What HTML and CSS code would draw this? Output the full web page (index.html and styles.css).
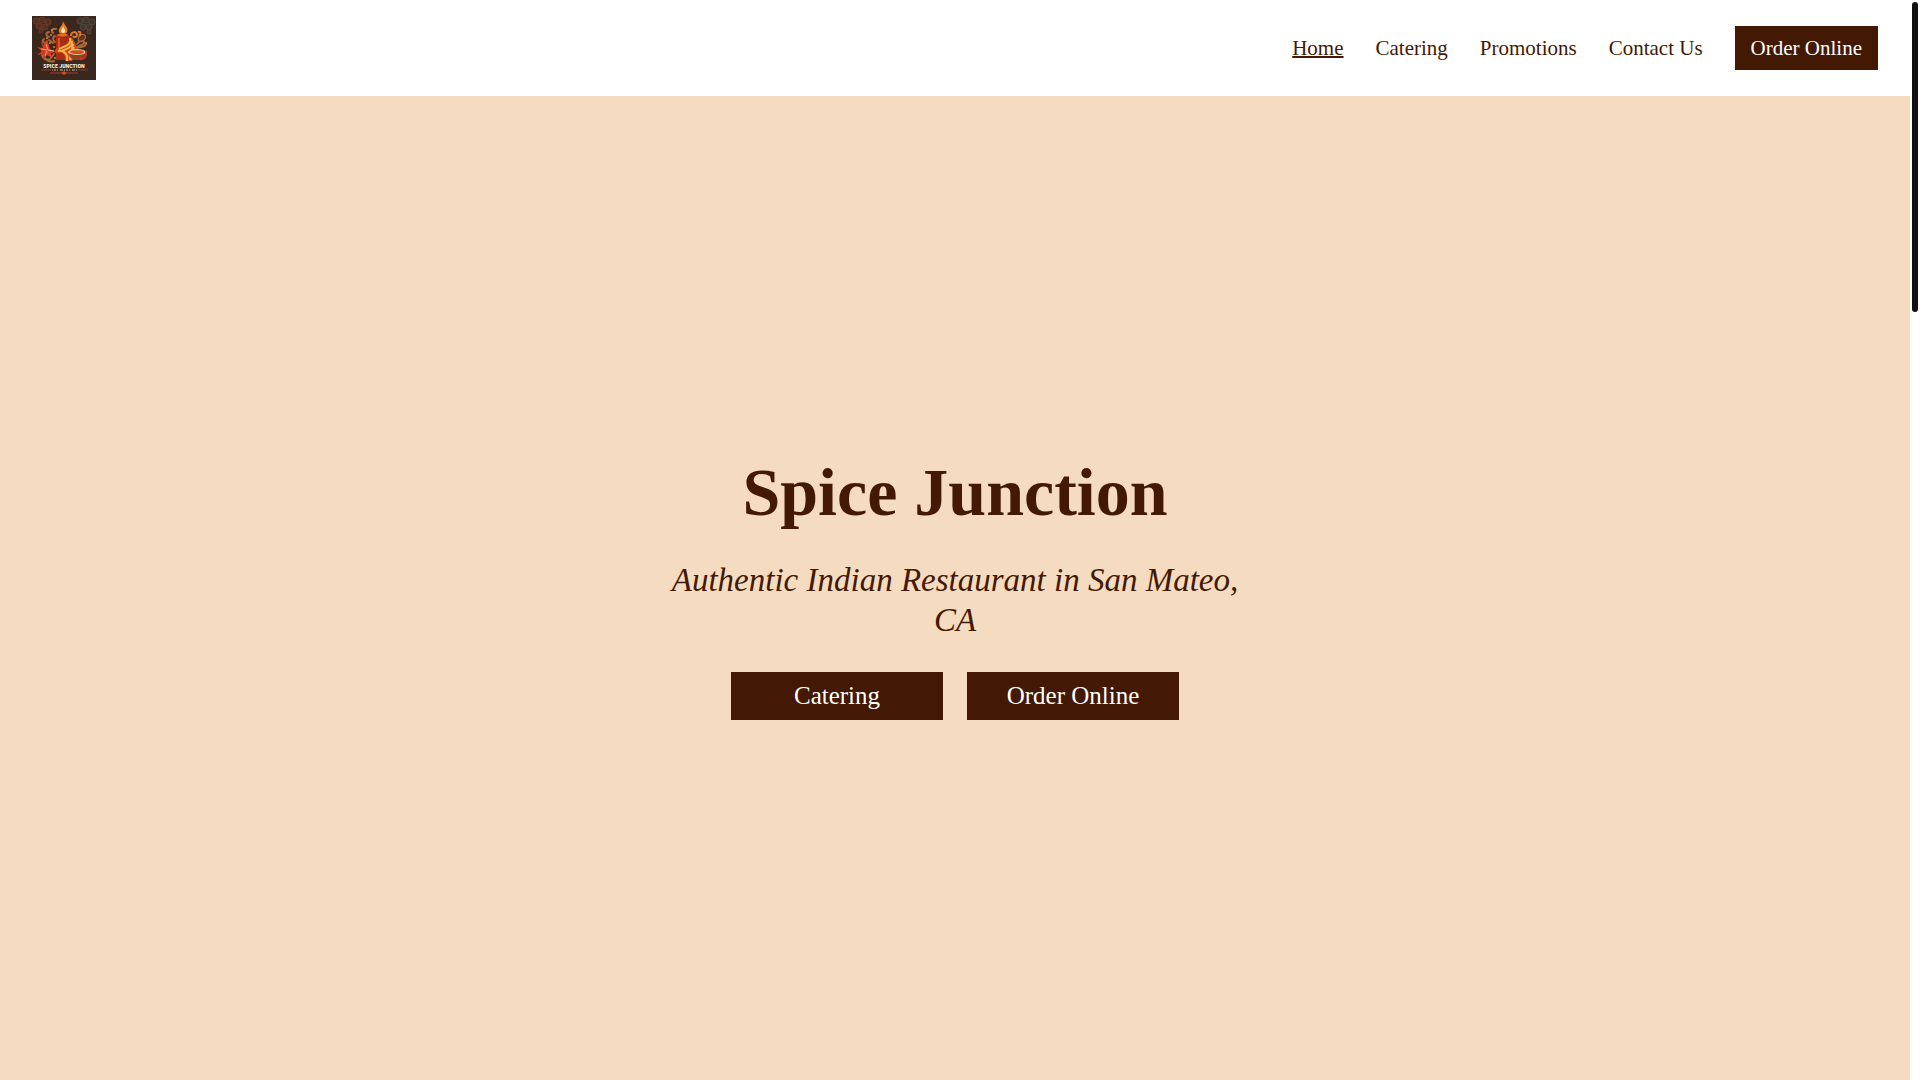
FILE: index.html
```html
<!DOCTYPE html>
<html lang="en">
<head>
    <meta charset="UTF-8">
    <meta name="viewport" content="width=device-width, initial-scale=1.0">
    <title>Spice Junction</title>
    <link rel="stylesheet" href="styles.css">
</head>
<body>
    <header class="header">
        <a href="#" class="logo" aria-label="Spice Junction">
            <svg viewBox="0 0 64 64" width="64" height="64">
                <rect width="64" height="64" fill="#3a281f"/>
                <!-- faded corner spices -->
                <g fill="#54301f" stroke="#6b3a26">
                    <circle cx="4" cy="5" r="3"/>
                    <circle cx="10" cy="4" r="3"/>
                    <circle cx="16" cy="6" r="3"/>
                    <circle cx="7" cy="10" r="3"/>
                    <circle cx="13" cy="11" r="3"/>
                    <circle cx="9" cy="15" r="2"/>
                </g>
                <g fill="#43362e" stroke="#52453c">
                    <circle cx="48" cy="5" r="3"/>
                    <circle cx="54" cy="4" r="3"/>
                    <circle cx="60" cy="6" r="3"/>
                    <circle cx="51" cy="11" r="3"/>
                    <circle cx="57" cy="11" r="3"/>
                    <circle cx="57" cy="16" r="2"/>
                </g>
                <!-- wreath of seeds and leaves -->
                <g fill="none" stroke="#a76935" stroke-width="2" stroke-linecap="round">
                    <path d="M24 13c-4-1-5 2-3 4M17 16c-4 1-3 4 0 5M12 23c-3 2 0 5 3 3M23 20c-3 1-2 5 0 6M10 39c1 4 5 6 8 4M13 42c3 4 6 4 9 3M21 27l-4-3M22 38l-3 4"/>
                    <path d="M45 28c3-4 8-4 7-1-2 3-6 2-9 6M43 33c4-3 10-1 11-5M39 23c2 1 2 3 1 5"/>
                </g>
                <g fill="#d88a3e">
                    <circle cx="19" cy="19" r="1"/>
                    <circle cx="20" cy="14" r="1"/>
                    <circle cx="15" cy="22" r="1"/>
                    <circle cx="18" cy="27" r="1"/>
                    <circle cx="22" cy="31" r="1"/>
                    <circle cx="41" cy="27" r="1"/>
                    <circle cx="23" cy="42" r="1"/>
                    <circle cx="54" cy="27" r="1"/>
                </g>
                <path d="M46 25c0-5 3-8 7-6 2 4-2 7-7 6z" fill="#6d3218" stroke="#c37a3d"/>
                <path d="M39 20c0-5 6-5 6-1 0 2-3 3-4 1M46 16c3-1 3 2 1 4" fill="none" stroke="#dc7a2c" stroke-width="2"/>
                <!-- candle -->
                <path d="M31 5c1 4 6 7 4 11-1 3-7 3-8 0-1-4 4-6 4-11z" fill="#e77b24"/>
                <path d="M31 10c1 3 3 4 2 6-1 2-4 1-4-1s2-3 2-5z" fill="#ffe3a0"/>
                <path d="M24 19c3-2 10-2 13 0v25H24z" fill="#a92c16"/>
                <path d="M25 19c3-2 8-2 11 0-3 2-8 2-11 0z" fill="#e46b22"/>
                <path d="M27 22v13" stroke="#e15322" stroke-width="2"/>
                <!-- ribbons of spice -->
                <path d="M37 20c3 7-2 8-9 11-6 2-7 6-3 6 6-2 9 2 8 8h7c-1-5 1-7 3-10 3-5 0-11-6-15z" fill="#d34b1d"/>
                <path d="M38 22c2 7-5 8-11 11M40 25c1 6-5 8-11 10M26 35c6-1 10 3 9 10M41 28c0 5-3 8-3 16" fill="none" stroke="#f6b344" stroke-width="2"/>
                <path d="M42 31c0 5-3 6-2 13" fill="none" stroke="#ffd579"/>
                <!-- flower -->
                <path d="M18 33l-3-10-3 6-3-3 2 6-6-1 5 4-5 4 6-1 0 6 4-5 5 3-1-5 6-1z" fill="#d83a21"/>
                <path d="M16 34l-2-6M15 34l-6-1M15 35l-2 5M16 34l6 1" stroke="#ffad80"/>
                <!-- bowl of curry -->
                <path d="M37 36h17c0 4-3 7-6 8h-6c-3-1-5-4-5-8z" fill="#924020"/>
                <ellipse cx="45" cy="36" rx="9" ry="3" fill="#ecc291"/>
                <ellipse cx="45" cy="36" rx="7" ry="2" fill="#d14b1d"/>
                <path d="M43 35l2-1 2 2" fill="none" stroke="#7aa348"/>
                <path d="M48 43c4 1 7-3 6-8" fill="none" stroke="#cc331b" stroke-width="2"/>
                <path d="M9 54h10M46 54h10" stroke="#8e3b26"/>
                <text x="32" y="52" class="logo-text">SPICE JUNCTION</text>
                <path d="M20 54h25" stroke="#cdb79c" stroke-dasharray="1 1 2 1 1 2 3 1"/>
                <path d="M18 57h28" stroke="#a93822"/>
                <path d="M29 57l3-2 3 2-3 2z" fill="#d04629"/>
            </svg>
        </a>
        <nav class="nav">
            <a href="#" class="nav-link active">Home</a>
            <a href="#" class="nav-link">Catering</a>
            <a href="#" class="nav-link">Promotions</a>
            <a href="#" class="nav-link">Contact Us</a>
            <a href="#" class="nav-order">Order Online</a>
        </nav>
    </header>

    <main class="hero">
        <h1 class="hero-title">Spice Junction</h1>
        <p class="hero-subtitle">Authentic Indian Restaurant in San Mateo, CA</p>
        <div class="hero-buttons">
            <a href="#" class="hero-button">Catering</a>
            <a href="#" class="hero-button">Order Online</a>
        </div>
    </main>

    <div class="scrollbar"></div>
</body>
</html>
```
FILE: styles.css
```css
* {
    box-sizing: border-box;
    margin: 0;
    padding: 0;
}

body {
    display: flex;
    flex-direction: column;
    min-height: 100vh;
    padding-right: 10px;
    background-color: #fff;
    color: #431903;
    font-family: "Liberation Serif", serif;
}

a {
    color: inherit;
    text-decoration: none;
}

.header {
    display: flex;
    align-items: center;
    justify-content: space-between;
    padding: 16px 32px;
}

.logo,
.logo svg {
    display: block;
}

.logo-text {
    fill: #fff0da;
    font-family: "Roboto Condensed", Roboto, sans-serif;
    font-size: 6px;
    font-weight: bold;
    text-anchor: middle;
}

.nav {
    display: flex;
    align-items: center;
    gap: 32px;
    font-size: 21px;
    line-height: 28px;
}

.nav-link.active {
    text-decoration: underline;
    text-decoration-thickness: 2px;
}

.nav-order {
    padding: 8px 16px;
    background-color: #431903;
    color: #fff;
}

.hero {
    flex: 1;
    display: flex;
    flex-direction: column;
    align-items: center;
    justify-content: center;
    gap: 32px;
    background-color: #f5dbc0;
    text-align: center;
}

.hero-title {
    font-size: 68px;
    line-height: 72px;
}

.hero-subtitle {
    max-width: 600px;
    font-size: 33px;
    font-style: italic;
    line-height: 40px;
}

.hero-buttons {
    display: flex;
    gap: 24px;
}

.hero-button {
    width: 212px;
    background-color: #431903;
    color: #fff;
    font-size: 25px;
    line-height: 48px;
}

/* page scroll thumb */
.scrollbar {
    position: fixed;
    top: 2px;
    right: 2px;
    width: 6px;
    height: 310px;
    border-radius: 3px;
    background-color: #111;
}
```
